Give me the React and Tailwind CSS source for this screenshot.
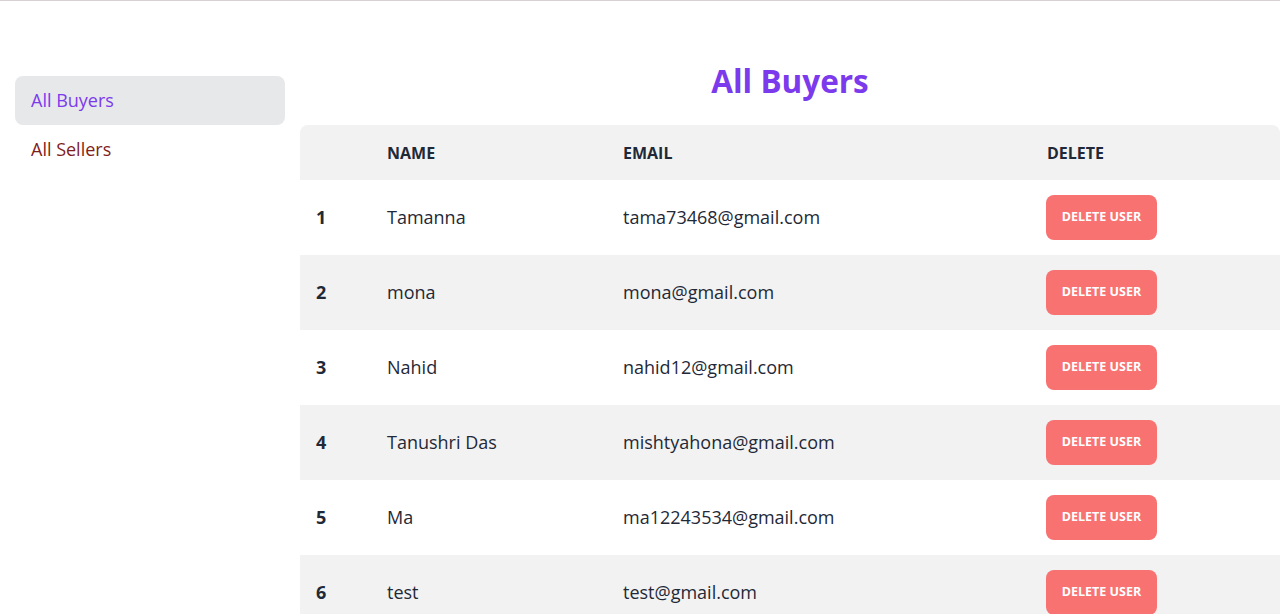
import React from 'react'

const buyers = [
  { name: 'Tamanna', email: 'tama73468@gmail.com' },
  { name: 'mona', email: 'mona@gmail.com' },
  { name: 'Nahid', email: 'nahid12@gmail.com' },
  { name: 'Tanushri Das', email: 'mishtyahona@gmail.com' },
  { name: 'Ma', email: 'ma12243534@gmail.com' },
  { name: 'test', email: 'test@gmail.com' }
]

const App = () => {
  return (
    <div
      className="min-h-[614px] bg-white border-t border-[#d8d0d3] text-[#1f2937] overflow-hidden"
      style={{ fontFamily: '"Open Sans", "Noto Sans", sans-serif' }}
    >
      <div className="flex">
        <aside className="w-[270px] ml-[15px] mt-[75px] shrink-0">
          <ul className="flex flex-col">
            <li className="h-[49px] flex items-center px-4 rounded-lg bg-[#e7e8ea] text-[18px] text-[#7c3aed]">
              All Buyers
            </li>
            <li className="h-[49px] flex items-center px-4 text-[18px] text-[#7f1d1d]">
              All Sellers
            </li>
          </ul>
        </aside>

        <main className="ml-[15px] flex-1 pt-[60px]">
          <h1 className="text-center text-[31.5px] leading-10 font-bold text-[#7c3aed] mb-[24px]">
            All Buyers
          </h1>
          <table className="w-full table-fixed border-collapse text-left">
            <colgroup>
              <col className="w-[71px]" />
              <col className="w-[236px]" />
              <col className="w-[424px]" />
              <col />
            </colgroup>
            <thead>
              <tr className="h-[55px] bg-[#f2f2f2] text-[16px] font-bold uppercase text-[#1f2937]">
                <th className="px-4 rounded-tl-lg"></th>
                <th className="px-4">Name</th>
                <th className="px-4">Email</th>
                <th className="px-4 rounded-tr-lg">Delete</th>
              </tr>
            </thead>
            <tbody>
              {buyers.map((buyer, i) => (
                <tr
                  key={buyer.email}
                  className={`h-[75px] text-[18px] ${i % 2 === 1 ? 'bg-[#f2f2f2]' : 'bg-white'}`}
                >
                  <th className="px-4 font-bold">{i + 1}</th>
                  <td className="px-4">{buyer.name}</td>
                  <td className="px-4">{buyer.email}</td>
                  <td className="pl-[15px] pr-4">
                    <button
                      type="button"
                      className="w-[111px] h-[45px] rounded-lg bg-[#f87272] text-white text-[12.5px] font-bold uppercase"
                    >
                      Delete User
                    </button>
                  </td>
                </tr>
              ))}
            </tbody>
          </table>
        </main>
      </div>
    </div>
  )
}

export default App
